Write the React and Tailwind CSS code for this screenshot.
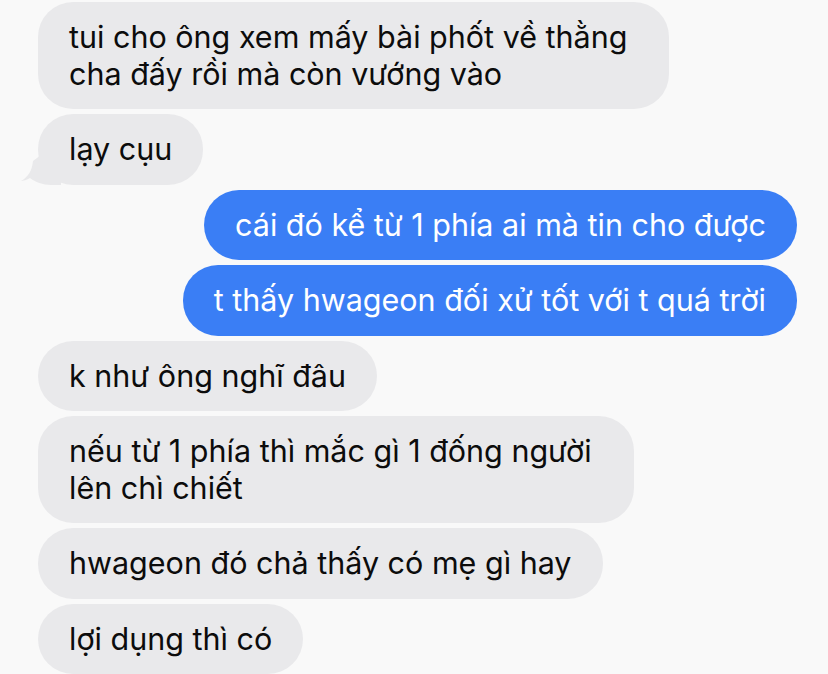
const FONT = { fontFamily: 'Inter, "Noto Sans", "Liberation Sans", sans-serif' };

const MESSAGES = [
  { from: "them", lines: ["tui cho ông xem mấy bài phốt về thằng", "cha đấy rồi mà còn vướng vào"] },
  { from: "them", lines: ["lạy cụu"], tail: true },
  { from: "me", lines: ["cái đó kể từ 1 phía ai mà tin cho được"] },
  { from: "me", lines: ["t thấy hwageon đối xử tốt với t quá trời"] },
  { from: "them", lines: ["k như ông nghĩ đâu"] },
  { from: "them", lines: ["nếu từ 1 phía thì mắc gì 1 đống người", "lên chì chiết"] },
  { from: "them", lines: ["hwageon đó chả thấy có mẹ gì hay"] },
  { from: "them", lines: ["lợi dụng thì có"] },
];

function Bubble({ msg }) {
  const mine = msg.from === "me";
  const wrapped = msg.lines.length > 1;
  return (
    <div
      className={`relative rounded-[35px] pl-[31px] py-[17px] text-[30.5px] leading-[36.5px] ${
        wrapped ? "pr-[42px]" : "pr-[31px]"
      } ${mine ? "self-end bg-[#3a7ef5] text-white" : "self-start bg-[#e9e9eb] text-[#0c0c0c]"}`}
    >
      {msg.tail && (
        <svg className="absolute left-[-17px] bottom-0" width="40" height="30" viewBox="0 0 40 30">
          <path d="M40 0 L40 30 L30 30 C22 30 14 27 9 23 C6 25 2 26 0 26 C7 22 11 16 12 6 L20 0 Z" fill="#e9e9eb" />
        </svg>
      )}
      <span className="relative">
        {msg.lines.map((l, i) => (
          <span key={i} className="block whitespace-nowrap">{l}</span>
        ))}
      </span>
    </div>
  );
}

export default function App() {
  return (
    <div style={FONT} className="w-[828px] h-[674px] overflow-hidden bg-[#f9f9f9] flex flex-col gap-[5px] pt-[2px] pl-[38px] pr-[31px]">
      {MESSAGES.map((m, i) => (
        <Bubble key={i} msg={m} />
      ))}
    </div>
  );
}
